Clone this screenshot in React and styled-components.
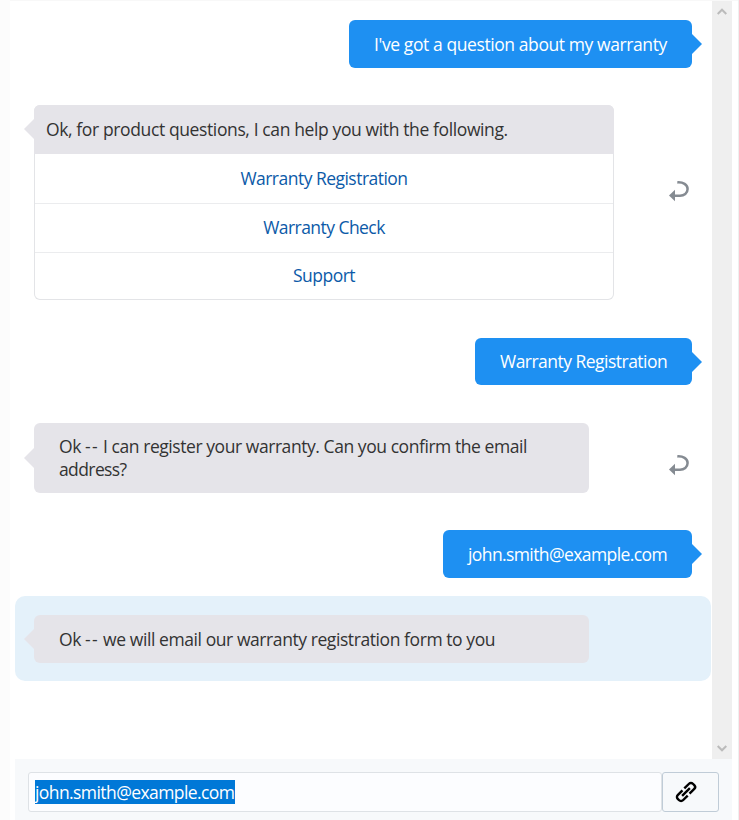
import React from 'react';
import styled, { createGlobalStyle } from 'styled-components';

const Global = createGlobalStyle`
  * { box-sizing: border-box; }
  body { margin: 0; background: #fff; font-family: 'Open Sans', 'Noto Sans', sans-serif; font-size: 17.5px; line-height: 23px; color: #333; overflow: hidden; }
`;
const Page = styled.div`
  display: flex; width: 739px; height: 820px; padding-right: 1px;
  background: #efefef;
`;
const Gutter = styled.div`flex: 0 0 10px; background: #fcfcfc;`;
const Panel = styled.main`
  flex: 1; display: flex; flex-direction: column; background: #fff;
  padding: 0 6px 0 5px; border-top: 1px solid #f8f8f8;
`;
const Viewport = styled.section`display: flex; height: 758px;`;
const Messages = styled.div`
  width: 697px; display: flex; flex-direction: column; padding-top: 19px;
`;
const Row = styled.div`
  display: flex; align-items: center; justify-content: space-between;
  margin-bottom: ${p => p.$gap}px; padding: 0 20px 0 19px;
`;
const SentRow = styled(Row)`justify-content: flex-end;`;
const HighlightRow = styled(Row)`
  width: 696px; height: 85px; background: #e4f1fa; border-radius: 10px;
`;
const Text = styled.span`white-space: pre; letter-spacing: ${p => p.$ls || 0}px;`;
const Dashes = styled.span`letter-spacing: 1.3px;`;
const Bubble = styled.div`
  position: relative; display: flex; flex-direction: column; justify-content: center;
  width: ${p => p.$w}px; height: ${p => p.$h}px; padding: ${p => p.$pt || 0}px 25px 0; border-radius: 6px;
  background: #e5e4e9;
  &::before {
    content: ''; position: absolute; left: -10px; top: calc(50% - 10px);
    border: 10px solid transparent; border-left: 0; border-right-color: #e5e4e9;
  }
`;
const Sent = styled(Bubble)`
  background: #1e90f2; color: #fff; align-items: flex-start; padding-right: 0;
  &::before { left: auto; right: -10px; border: 10px solid transparent; border-right: 0; border-left-color: #1e90f2; }
`;
const Card = styled.div`
  position: relative; width: 580px; height: 195px; display: grid; grid-template-rows: 49px 50px 49px 47px;
  border-radius: 6px; box-shadow: inset 0 0 0 1px #e3e4e7;
  &::before {
    content: ''; position: absolute; left: -10px; top: 14px;
    border: 10px solid transparent; border-left: 0; border-right-color: #e5e4e9;
  }
`;
const CardHead = styled.div`
  display: flex; align-items: center; padding-left: 12px; background: #e5e4e9; border-radius: 6px 6px 0 0;
`;
const Option = styled.div`
  display: flex; align-items: center; justify-content: center; color: #0c5aa8; margin: 0 1px;
  & + & { padding-bottom: 2px; }
  &:last-child { padding-bottom: 3px; }
  &:not(:last-child) { border-bottom: 1px solid #ebecee; }
`;
const Return = styled.svg`
  width: 20px; height: 20px; margin-right: 3px; overflow: visible;
  transform: translateY(${p => p.$shift}px);
`;
const Scrollbar = styled.div`
  width: 20px; background: #efefef; display: flex; flex-direction: column;
  justify-content: space-between; align-items: center; padding: 7px 0;
`;
const Chevron = styled.svg`width: 10px; height: 7px; margin-right: 1px;`;
const Composer = styled.footer`
  display: flex; width: 717px; height: 61px; padding: 13px 13px 0; background: #f7f9fb;
`;
const Field = styled.div`
  width: 634px; height: 40px; display: flex; align-items: center; padding-left: 6px;
  border: 1px solid #dee2e6; border-radius: 3px; background: #fcfdff;
`;
const Selected = styled.span`
  display: block; width: 200px; height: 24px; line-height: 25px; background: #0078d7; color: #fff; white-space: pre;
`;
const Attach = styled.button`
  width: 57px; height: 40px; display: flex; align-items: center; padding: 0 0 0 13px;
  border: 1px solid #c0ccd7; border-radius: 3px; background: #f7f9fb;
`;
const LinkSvg = styled.svg`width: 20px; height: 20px; overflow: visible;`;

const ReturnArrow = ({ shift }) => (
  <Return viewBox="0 0 20 20" $shift={shift}>
    <path d="M8.3 1.4C14 1 18.6 3.6 18.6 8S15 14.7 11 14.7H5" fill="none" stroke="#858b92" strokeWidth="2.5" />
    <path d="M0 14.5L6 8.8V20.2Z" fill="#858b92" />
  </Return>
);

export default function App() {
  return (
    <>
      <Global />
      <Page>
        <Gutter />
        <Panel>
          <Viewport>
            <Messages>
              <SentRow $gap={37}><Sent $w={343} $h={48}><Text $ls={-0.41}>I've got a question about my warranty</Text></Sent></SentRow>
              <Row $gap={38}>
                <Card>
                  <CardHead><Text $ls={-0.38}>Ok, for product questions, I can help you with the following.</Text></CardHead>
                  <Option><Text $ls={-0.52}>Warranty Registration</Text></Option>
                  <Option><Text $ls={-0.55}>Warranty Check</Text></Option>
                  <Option><Text $ls={-0.49}>Support</Text></Option>
                </Card>
                <ReturnArrow shift={-12} />
              </Row>
              <SentRow $gap={38}><Sent $w={217} $h={47}><Text $ls={-0.52}>Warranty Registration</Text></Sent></SentRow>
              <Row $gap={37}>
                <Bubble $w={555} $h={70}>
                  <Text $ls={-0.44}>Ok <Dashes>--</Dashes> I can register your warranty. Can you confirm the email</Text>
                  <Text $ls={-0.6}>address?</Text>
                </Bubble>
                <ReturnArrow shift={7} />
              </Row>
              <SentRow $gap={18}><Sent $w={249} $h={48}><Text $ls={-0.6}>john.smith@example.com</Text></Sent></SentRow>
              <HighlightRow $gap={0}><Bubble $w={555} $h={48} $pt={1}><Text $ls={-0.42}>Ok <Dashes>--</Dashes> we will email our warranty registration form to you</Text></Bubble></HighlightRow>
            </Messages>
            <Scrollbar>
              <Chevron viewBox="0 0 10 7"><path d="M.7 6L5 1.7 9.3 6" fill="none" stroke="#bbb" strokeWidth="2" /></Chevron>
              <Chevron viewBox="0 0 10 7"><path d="M.7 1L5 5.3 9.3 1" fill="none" stroke="#bbb" strokeWidth="2" /></Chevron>
            </Scrollbar>
          </Viewport>
          <Composer>
            <Field><Selected><Text $ls={-0.58}>john.smith@example.com</Text></Selected></Field>
            <Attach aria-label="Attach link">
              <LinkSvg viewBox="0 0 20 20" fill="none" stroke="#000" strokeWidth="2.4">
                <g transform="rotate(-45 10 10)">
                  <path d="M8.7 6.3H2a2.7 2.7 0 0 0-2.7 2.7v2A2.7 2.7 0 0 0 2 13.7h6.7M11.3 6.3H18a2.7 2.7 0 0 1 2.7 2.7v2a2.7 2.7 0 0 1-2.7 2.7h-6.7M4.5 10h11" />
                </g>
              </LinkSvg>
            </Attach>
          </Composer>
        </Panel>
      </Page>
    </>
  );
}
